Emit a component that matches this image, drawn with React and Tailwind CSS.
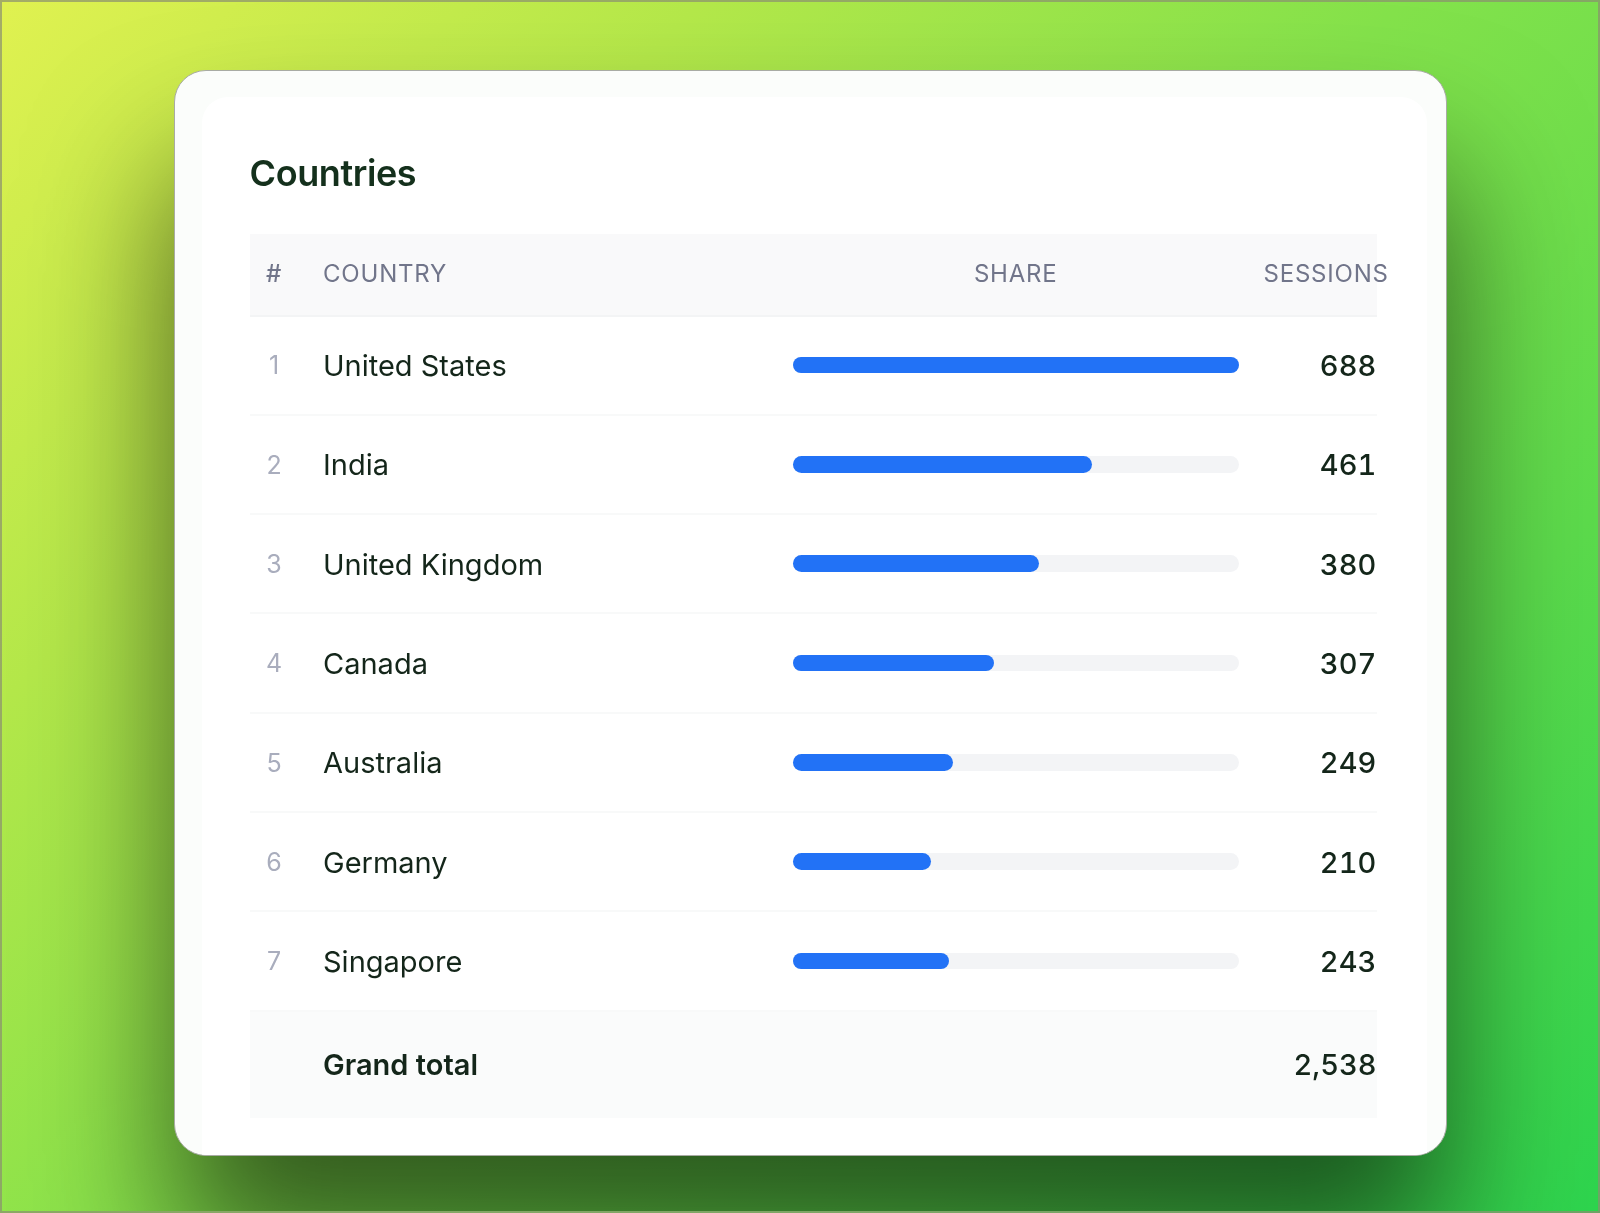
import React from 'react'

const rows = [
  { rank: 1, name: 'United States', share: 100, sessions: '688' },
  { rank: 2, name: 'India', share: 67.2, sessions: '461' },
  { rank: 3, name: 'United Kingdom', share: 55.2, sessions: '380' },
  { rank: 4, name: 'Canada', share: 45.2, sessions: '307' },
  { rank: 5, name: 'Australia', share: 36, sessions: '249' },
  { rank: 6, name: 'Germany', share: 31, sessions: '210' },
  { rank: 7, name: 'Singapore', share: 35, sessions: '243' },
]

const cols = 'grid grid-cols-[73.5px_470px_445.5px_138px] items-center'

const Row = ({ rank, name, share, sessions }) => (
  <div className={`${cols} h-[99.3px] border-b-2 border-[#f8f9f9] text-[29px] text-[#14261a]`}>
    <div className="w-[49px] pt-[2px] text-center text-[25px] text-[#a9adbd]">{rank}</div>
    <div className="pt-[1.5px] font-[425]">{name}</div>
    <div className="h-[16.5px] rounded-full bg-[#f3f4f6]">
      <div className="h-full rounded-full bg-[#2272f6]" style={{ width: `${share}%` }} />
    </div>
    <div className="pt-[1.5px] text-right font-[550] tabular-nums tracking-[0.1px]">{sessions}</div>
  </div>
)

export default function App() {
  return (
    <div className="h-[1213px] w-full overflow-hidden border-2 border-[#8a8f70]/70 bg-[linear-gradient(135deg,#e0f150_0%,#b4e84a_25%,#84e24b_50%,#5cdb4c_75%,#2dd44e_100%)] bg-origin-border pl-[172px] pt-[68px] font-['Inter',sans-serif]">
      <div className="h-[1086px] w-[1273px] overflow-hidden rounded-[32px] border-[1.5px] border-[#a8aba4] bg-[#fbfdfb] pl-[26.5px] pt-[25.5px] shadow-[0_100px_140px_rgba(0,0,0,0.6)]">
        <div className="h-[1059px] w-[1225px] rounded-tl-[26px] rounded-tr-[26px] bg-white pl-[48px] pt-[52px] blur-[0.5px]">
          <h2 className="text-[36px] font-semibold leading-[48px] tracking-[-0.4px] text-[#14301c]">Countries</h2>
          <div className="mt-[37px] w-[1127px]">
            <div className={`${cols} h-[83px] border-b-2 border-[#f3f4f5] bg-[#f9f9fa] text-[24px] tracking-[0.8px] text-[#71758a]`}>
              <div className="w-[49px] text-center font-medium">#</div>
              <div>COUNTRY</div>
              <div className="text-center">SHARE</div>
              <div className="whitespace-nowrap pl-[25px]">SESSIONS</div>
            </div>
            {rows.map((row) => (
              <Row key={row.rank} {...row} />
            ))}
            <div className={`${cols} h-[106px] bg-[#fafbfb] text-[29px] text-[#14261a]`}>
              <div />
              <div className="font-semibold">Grand total</div>
              <div />
              <div className="text-right font-[550] tabular-nums">2,538</div>
            </div>
          </div>
        </div>
      </div>
    </div>
  )
}
